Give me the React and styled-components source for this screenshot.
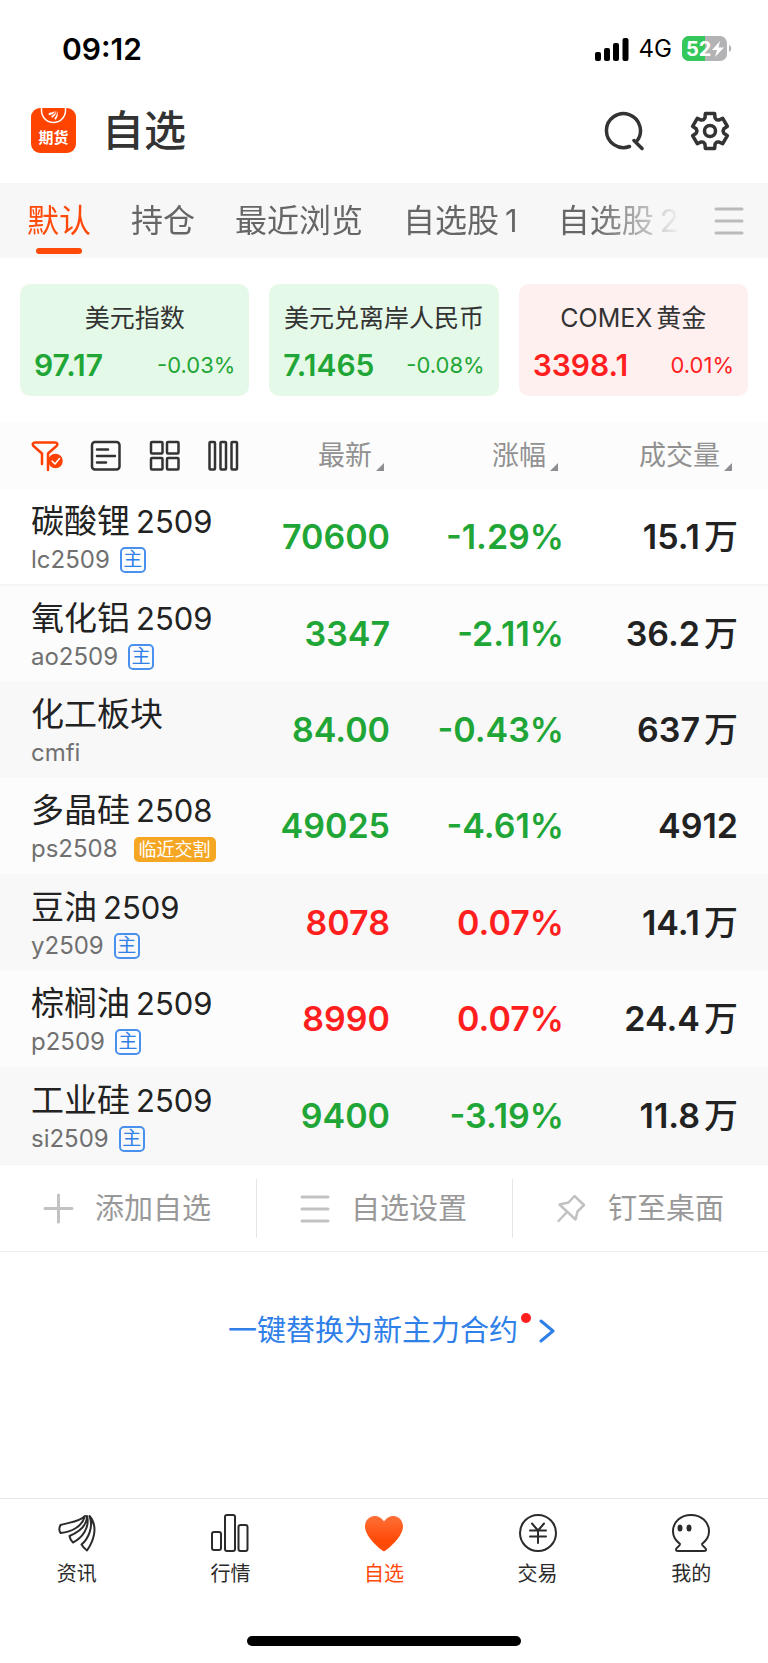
import React from "react";
import styled, { createGlobalStyle } from "styled-components";

const GlobalStyle = createGlobalStyle`
  * {
    box-sizing: border-box;
  }
  body {
    margin: 0;
    background: #fff;
    color: #222;
    font-family: Inter, "Noto Sans CJK SC", sans-serif;
  }
  button {
    padding: 0;
    border: 0;
    background: none;
    color: inherit;
    font: inherit;
    cursor: pointer;
  }
  a {
    color: inherit;
    text-decoration: none;
  }
  svg {
    display: block;
    flex: none;
  }
`;

const GREEN = "#1fa637";
const RED = "#ff1f1f";
const ORANGE = "#ff4a0a";
const BLUE = "#2f80e8";

const Page = styled.div`
  display: flex;
  flex-direction: column;
  min-height: 100vh;
`;

const StatusBar = styled.div`
  display: flex;
  align-items: center;
  justify-content: space-between;
  height: 98px;
  padding: 0 36px 0 62px;
  color: #000;
`;

const Clock = styled.time`
  font-size: 30px;
  font-weight: 600;
  line-height: 36px;
`;

const StatusIcons = styled.div`
  display: flex;
  align-items: center;
  gap: 10px;
  font-size: 24px;
  line-height: 32px;
`;

const Header = styled.header`
  display: flex;
  align-items: center;
  height: 85px;
  padding: 0 38px 20px 31px;
  color: #333;
`;

const Title = styled.h1`
  flex: 1;
  margin: 0 0 0 26px;
  font-size: 42px;
  font-weight: 500;
  line-height: 56px;
`;

const HeaderActions = styled.div`
  display: flex;
  gap: 46px;
`;

const TabBar = styled.div`
  display: flex;
  align-items: center;
  height: 75px;
  padding: 0 24px 0 27px;
  background: #f7f7f7;
  color: #bbb;
`;

const TabList = styled.nav`
  display: flex;
  flex: 1;
  gap: 40px;
  min-width: 0;
  margin-right: 31px;
  overflow: hidden;
  mask-image: linear-gradient(to right, #000 calc(100% - 90px), transparent);
`;

const Tab = styled.button`
  position: relative;
  flex: none;
  height: 75px;
  color: ${props => (props.$active ? ORANGE : "#666")};
  font-size: 32px;
  line-height: 44px;
  &::after {
    content: "";
    display: ${props => (props.$active ? "block" : "none")};
    position: absolute;
    left: 9px;
    right: 9px;
    bottom: 4px;
    height: 6px;
    border-radius: 3px;
    background: ${ORANGE};
  }
`;

const Num = styled.span`
  margin-left: 6px;
  font-size: 31px;
`;

const Cards = styled.section`
  display: grid;
  grid-template-columns: repeat(3, 1fr);
  gap: 20px;
  padding: 26px 20px;
`;

const Card = styled.a`
  height: 112px;
  padding: 16px 14px 0;
  border-radius: 10px;
  background: ${props => (props.$up ? "#fff0f0" : "#e5f9e8")};
  color: ${props => (props.$up ? RED : GREEN)};
`;

const CardTitle = styled.div`
  display: flex;
  justify-content: center;
  gap: 4px;
  color: #333;
  font-size: 25px;
  line-height: 36px;
  white-space: nowrap;
`;

const CardFigures = styled.div`
  display: flex;
  align-items: center;
  justify-content: space-between;
  margin-top: 11px;
  font-size: 22px;
  line-height: 36px;
  strong {
    font-size: 30px;
    font-weight: 600;
  }
`;

const Quotes = styled.table`
  width: 100%;
  border-collapse: collapse;
  table-layout: fixed;
`;

const HeadRow = styled.tr`
  height: 67px;
  background: #fcfcfc;
  th {
    padding: 0 36px 0 0;
    color: #919191;
    font-weight: 400;
    text-align: right;
  }
  th:first-child {
    padding: 0 0 0 31px;
    color: #333;
  }
`;

const NameCol = styled.col`
  width: auto;
`;

const FigureCol = styled.col`
  width: 174px;
`;

const ViewModes = styled.div`
  display: flex;
  gap: 27px;
`;

const SortButton = styled.button`
  display: inline-flex;
  align-items: flex-end;
  gap: 4px;
  font-size: 27px;
  line-height: 38px;
  white-space: nowrap;
  &::after {
    content: "";
    margin-bottom: 4px;
    border-bottom: 8px solid #8e8e93;
    border-left: 8px solid transparent;
  }
`;

const QuoteRow = styled.tr`
  height: 96px;
  background: #fcfcfc;
  &:nth-child(odd) {
    height: 97px;
    background: #f8f8f8;
  }
  &:first-child {
    height: 96px;
    border-bottom: 2px solid #f5f5f5;
    background: #fff;
  }
`;

const NameCell = styled.th`
  padding: 3px 0 0 31px;
  font-weight: 400;
  text-align: left;
  white-space: nowrap;
`;

const Name = styled.div`
  font-size: 33px;
  line-height: 43px;
`;

const Code = styled.div`
  display: flex;
  align-items: center;
  gap: ${props => (props.$expiring ? 16 : 10)}px;
  color: #707070;
  font-size: 24px;
  line-height: 34px;
`;

const MainBadge = styled.span`
  width: 26px;
  height: 26px;
  border: 2px solid #4a90ee;
  border-radius: 5px;
  color: ${BLUE};
  font-size: 19px;
  line-height: 22px;
  text-align: center;
`;

const ExpiryBadge = styled.span`
  padding: 0 5px;
  border-radius: 5px;
  background: #f5a623;
  color: #fff;
  font-size: 18px;
  line-height: 25px;
`;

const Figure = styled.td`
  padding: 0 30px 0 0;
  color: ${props => props.$color || "#222"};
  font-size: 34px;
  font-weight: 600;
  line-height: 48px;
  text-align: right;
  white-space: nowrap;
`;

const Unit = styled.span`
  margin-left: 4px;
  font-weight: 500;
  line-height: 1px;
`;

const Actions = styled.div`
  display: grid;
  grid-template-columns: repeat(3, 1fr);
  padding: 14px 0 13px;
  border-top: 1px solid #f4f4f4;
  border-bottom: 1px solid #ededed;
`;

const Action = styled.button`
  display: flex;
  align-items: center;
  gap: 21px;
  height: 59px;
  padding-left: 43px;
  color: #999;
  font-size: 29px;
  line-height: 40px;
  & + & {
    border-left: 1px solid #e6e6e6;
  }
  svg {
    color: #c2c2c2;
  }
`;

const ReplaceLink = styled.a`
  display: flex;
  align-items: center;
  align-self: center;
  margin: 58px 0 auto 18px;
  color: ${BLUE};
  font-size: 29px;
  line-height: 42px;
`;

const Dot = styled.i`
  align-self: flex-start;
  width: 10px;
  height: 10px;
  margin: 3px;
  border-radius: 50%;
  background: ${RED};
`;

const BottomNav = styled.nav`
  display: grid;
  grid-template-columns: repeat(5, 1fr);
  height: 138px;
  padding-top: 14px;
  border-top: 1px solid #e6e6e6;
`;

const NavItem = styled.a`
  display: flex;
  flex-direction: column;
  align-items: center;
  gap: 6px;
  color: ${props => (props.$active ? ORANGE : "#2b2b2b")};
  font-size: 20px;
  line-height: 30px;
`;

const HomeIndicator = styled.div`
  align-self: center;
  width: 274px;
  height: 10px;
  margin-bottom: 17px;
  border-radius: 5px;
  background: #000;
`;

const Icon = ({ size = 40, box = size, width = 2, children }) => (
  <svg
    width={size}
    height={size}
    viewBox={`0 0 ${box} ${box}`}
    fill="none"
    stroke="currentColor"
    strokeWidth={width}
    strokeLinecap="round"
    strokeLinejoin="round"
    aria-hidden="true"
  >
    {children}
  </svg>
);

// three leaves shared by the app logo and the news icon
const Leaves = () => (
  <>
    <path d="M28 3C22 9 13 9 3.5 12C2 15 2 18 3.7 20C14 19 25 14 28 3Z" />
    <path d="M30 3C30 12 22 19 12.5 23C13 26 14 28 16 29.5C25 25 33 15 30 3Z" />
    <path d="M32.5 3C37 14 31 26 24.5 31.5C26 34 28 36 30 37.5C36 29 42 14 32.5 3Z" />
  </>
);

const Signal = () => (
  <svg width="35" height="23" viewBox="0 0 35 23" aria-hidden="true">
    <rect x="1" y="14" width="6" height="9" rx="2" />
    <rect x="10" y="10" width="6" height="13" rx="2" />
    <rect x="19" y="5" width="6" height="18" rx="2" />
    <rect x="28.5" y="0" width="6" height="23" rx="2" />
  </svg>
);

const Battery = () => (
  <svg width="50" height="26" viewBox="0 0 50 26">
    <clipPath id="cell">
      <rect width="45" height="25" rx="7" />
    </clipPath>
    <g clipPath="url(#cell)">
      <rect width="45" height="25" fill="#b3b3b5" />
      <rect width="23" height="25" fill="#34c759" />
    </g>
    <path d="M47 9C50 10 50 15 47 16Z" fill="#b3b3b5" />
    <text x="4" y="20" fill="#fff" fontSize="20" fontWeight="700">
      52
    </text>
    <path d="M38 5L30 14H35L33 21L42 11.5H36.500Z" fill="#fff" />
  </svg>
);

const Logo = () => (
  <svg width="45" height="45" viewBox="0 0 45 45">
    <rect width="45" height="45" rx="9" fill="#ff4400" />
    <path
      d="M10.5 0V2.5A12 12 0 0 0 34.5 2.5V0"
      fill="none"
      stroke="#fff"
      strokeWidth="1.5"
    />
    <g fill="#fff" transform="translate(17 2) scale(.26)">
      <Leaves />
    </g>
    <text
      x="22.5"
      y="35"
      fill="#fff"
      fontSize="15"
      fontWeight="700"
      textAnchor="middle"
    >
      期货
    </text>
  </svg>
);

const SearchIcon = () => (
  <Icon width={3.5}>
    <path d="M25.5 35.500A17 17 0 1 1 32.5 30.500M30 29.500L38 37.500" />
  </Icon>
);

const gear = [0, 60, 120, 180, 240, 300]
  .flatMap(turn =>
    [[-21, 14], [-15, 18], [15, 18], [21, 14], [30, 13]].map(([offset, r]) => {
      const a = ((turn + offset - 90) * Math.PI) / 180;
      return `${20 + r * Math.cos(a)},${20 + r * Math.sin(a)}`;
    })
  )
  .join(" ");

const GearIcon = () => (
  <Icon width={3.5}>
    <polygon points={gear} />
    <circle cx="20" cy="20" r="5.5" />
  </Icon>
);

const MenuIcon = () => (
  <Icon size={30} width={3}>
    <path d="M2 3H28M2 15H28M2 27H28" />
  </Icon>
);

const FilterIcon = () => (
  <Icon size={32} width={2.5}>
    <g stroke="#ff4000">
      <path d="M11 24V13.5L2.5 6C1 4 2 2.5 4 2.5H24C26.5 2.5 27 4.5 25.5 6L17 13.5V30" />
      <circle cx="24.5" cy="21" r="6" fill="#ff4000" />
      <path d="M21 21L24 24L28.5 18.5" stroke="#fff" strokeWidth="1.5" />
    </g>
  </Icon>
);

const ListIcon = () => (
  <Icon size={32} width={2.5}>
    <rect x="2" y="2" width="27.5" height="27.5" rx="3" />
    <path d="M7 9.500H18M7 16H25M7 22.500H16" />
  </Icon>
);

const GridIcon = () => (
  <Icon size={32} width={2.5}>
    <rect x="2" y="2" width="11.5" height="11.5" rx="1" />
    <rect x="18" y="2" width="11.5" height="11.5" rx="1" />
    <rect x="2" y="18" width="11.5" height="11.5" rx="1" />
    <rect x="18" y="18" width="11.5" height="11.5" rx="1" />
  </Icon>
);

const ColumnsIcon = () => (
  <Icon size={32} width={2.5}>
    <rect x="1.5" y="2" width="5.500" height="27.5" rx="1" />
    <rect x="12.5" y="2" width="5.500" height="27.5" rx="1" />
    <rect x="23.5" y="2" width="5.500" height="27.5" rx="1" />
  </Icon>
);

const NewsIcon = () => (
  <Icon>
    <Leaves />
  </Icon>
);

const MarketIcon = () => (
  <Icon>
    <rect x="2" y="19" width="9" height="18" rx="2" />
    <rect x="15" y="2" width="10" height="36" rx="2" />
    <rect x="28.5" y="12" width="9" height="26" rx="2" />
  </Icon>
);

const HeartIcon = () => (
  <svg width="40" height="40" viewBox="0 0 40 40" aria-hidden="true">
    <linearGradient id="heart" x1="0" y1="0" x2="0" y2="1">
      <stop offset="0" stopColor="#ff7036" />
      <stop offset=".7" stopColor="#ff4a08" />
    </linearGradient>
    <path
      d="M20 38.5C17 37 1 24 1 13.5C1 7.5 5.5 3 10.5 3C14.5 3 18 5 20 8.5C22 5 25.5 3 29.5 3C34.5 3 39 7.5 39 13.5C39 24 23 37 20 38.5Z"
      fill="url(#heart)"
    />
  </svg>
);

const TradeIcon = () => (
  <Icon>
    <circle cx="20" cy="20" r="18" />
    <path d="M14 10.5L20 17.5L26 10.5M20 17.5V30M12 17.5H28M12 23.5H28" />
  </Icon>
);

const ProfileIcon = () => (
  <Icon>
    <path d="M9 31C4 27 2 23 2 18.5C2 8.5 10 2 20 2S38 8.5 38 18.5C38 23 36 27 31 31C31 33.5 35 34.5 35 36.5C35 37.5 34 38 33 38H7C6 38 5 37.5 5 36.5C5 34.5 9 33.5 9 31Z" />
    <ellipse cx="9" cy="15" rx="1.5" ry="2.5" fill="currentColor" />
    <ellipse cx="18" cy="15" rx="1.5" ry="2.5" fill="currentColor" />
  </Icon>
);

const PlusIcon = () => (
  <Icon size={31} width={3}>
    <path d="M15.5 2V29M2 15.5H29" />
  </Icon>
);

const PinIcon = () => (
  <Icon size={31} width={2.5}>
    <path d="M18.5 3L28 12L21.5 18.5L19.5 26.5L3.5 11.5L12.5 9.5ZM11 19L2.5 28" />
  </Icon>
);

const tabs = [["默认"], ["持仓"], ["最近浏览"], ["自选股", 1], ["自选股", 2]];

const indices = [
  { title: ["美元指数"], value: "97.17", change: "-0.03%" },
  { title: ["美元兑离岸人民币"], value: "7.1465", change: "-0.08%" },
  { title: ["COMEX", "黄金"], value: "3398.1", change: "0.01%", up: true }
];

const quotes = [
  { name: "碳酸锂", month: "2509", code: "lc2509", main: true, price: "70600", change: "-1.29%", volume: "15.1", unit: "万" },
  { name: "氧化铝", month: "2509", code: "ao2509", main: true, price: "3347", change: "-2.11%", volume: "36.2", unit: "万" },
  { name: "化工板块", code: "cmfi", price: "84.00", change: "-0.43%", volume: "637", unit: "万" },
  { name: "多晶硅", month: "2508", code: "ps2508", expiring: true, price: "49025", change: "-4.61%", volume: "4912" },
  { name: "豆油", month: "2509", code: "y2509", main: true, price: "8078", change: "0.07%", volume: "14.1", unit: "万" },
  { name: "棕榈油", month: "2509", code: "p2509", main: true, price: "8990", change: "0.07%", volume: "24.4", unit: "万" },
  { name: "工业硅", month: "2509", code: "si2509", main: true, price: "9400", change: "-3.19%", volume: "11.8", unit: "万" }
];

const navItems = [
  { label: "资讯", icon: <NewsIcon /> },
  { label: "行情", icon: <MarketIcon /> },
  { label: "自选", icon: <HeartIcon />, active: true },
  { label: "交易", icon: <TradeIcon /> },
  { label: "我的", icon: <ProfileIcon /> }
];

const Quote = props => {
  const { name, month, code, main, expiring, price, change, volume, unit } = props;
  const color = change.startsWith("-") ? GREEN : RED;
  return (
    <QuoteRow>
      <NameCell scope="row">
        <Name>
          {name}
          {month && <Num>{month}</Num>}
        </Name>
        <Code $expiring={expiring}>
          {code}
          {main && <MainBadge>主</MainBadge>}
          {expiring && <ExpiryBadge>临近交割</ExpiryBadge>}
        </Code>
      </NameCell>
      <Figure $color={color}>{price}</Figure>
      <Figure $color={color}>{change}</Figure>
      <Figure>
        {volume}
        {unit && <Unit>{unit}</Unit>}
      </Figure>
    </QuoteRow>
  );
};

const App = () => (
  <Page>
    <GlobalStyle />
    <StatusBar>
      <Clock>09:12</Clock>
      <StatusIcons>
        <Signal />
        <span>4G</span>
        <Battery />
      </StatusIcons>
    </StatusBar>
    <Header>
      <Logo />
      <Title>自选</Title>
      <HeaderActions>
        <button aria-label="搜索">
          <SearchIcon />
        </button>
        <button aria-label="设置">
          <GearIcon />
        </button>
      </HeaderActions>
    </Header>
    <TabBar>
      <TabList>
        {tabs.map(([label, number], i) => (
          <Tab key={i} $active={i === 0}>
            {label}
            {number && <Num>{number}</Num>}
          </Tab>
        ))}
      </TabList>
      <button aria-label="全部分组">
        <MenuIcon />
      </button>
    </TabBar>
    <Cards>
      {indices.map(item => (
        <Card key={item.value} href="#" $up={item.up}>
          <CardTitle>
            {item.title.map(part => (
              <span key={part}>{part}</span>
            ))}
          </CardTitle>
          <CardFigures>
            <strong>{item.value}</strong>
            <span>{item.change}</span>
          </CardFigures>
        </Card>
      ))}
    </Cards>
    <Quotes>
      <colgroup>
        <NameCol />
        <FigureCol />
        <FigureCol />
        <FigureCol />
      </colgroup>
      <thead>
        <HeadRow>
          <th>
            <ViewModes>
              <button aria-label="筛选">
                <FilterIcon />
              </button>
              <button aria-label="列表">
                <ListIcon />
              </button>
              <button aria-label="宫格">
                <GridIcon />
              </button>
              <button aria-label="多列">
                <ColumnsIcon />
              </button>
            </ViewModes>
          </th>
          {["最新", "涨幅", "成交量"].map(label => (
            <th key={label} scope="col">
              <SortButton>{label}</SortButton>
            </th>
          ))}
        </HeadRow>
      </thead>
      <tbody>
        {quotes.map(quote => (
          <Quote key={quote.code} {...quote} />
        ))}
      </tbody>
    </Quotes>
    <Actions>
      <Action>
        <PlusIcon />
        添加自选
      </Action>
      <Action>
        <MenuIcon />
        自选设置
      </Action>
      <Action>
        <PinIcon />
        钉至桌面
      </Action>
    </Actions>
    <ReplaceLink href="#">
      一键替换为新主力合约
      <Dot />
      <Icon size={24} width={3}>
        <path d="M7 2L19 12L7 22" />
      </Icon>
    </ReplaceLink>
    <BottomNav>
      {navItems.map(item => (
        <NavItem key={item.label} href="#" $active={item.active}>
          {item.icon}
          {item.label}
        </NavItem>
      ))}
    </BottomNav>
    <HomeIndicator />
  </Page>
);

export default App;
